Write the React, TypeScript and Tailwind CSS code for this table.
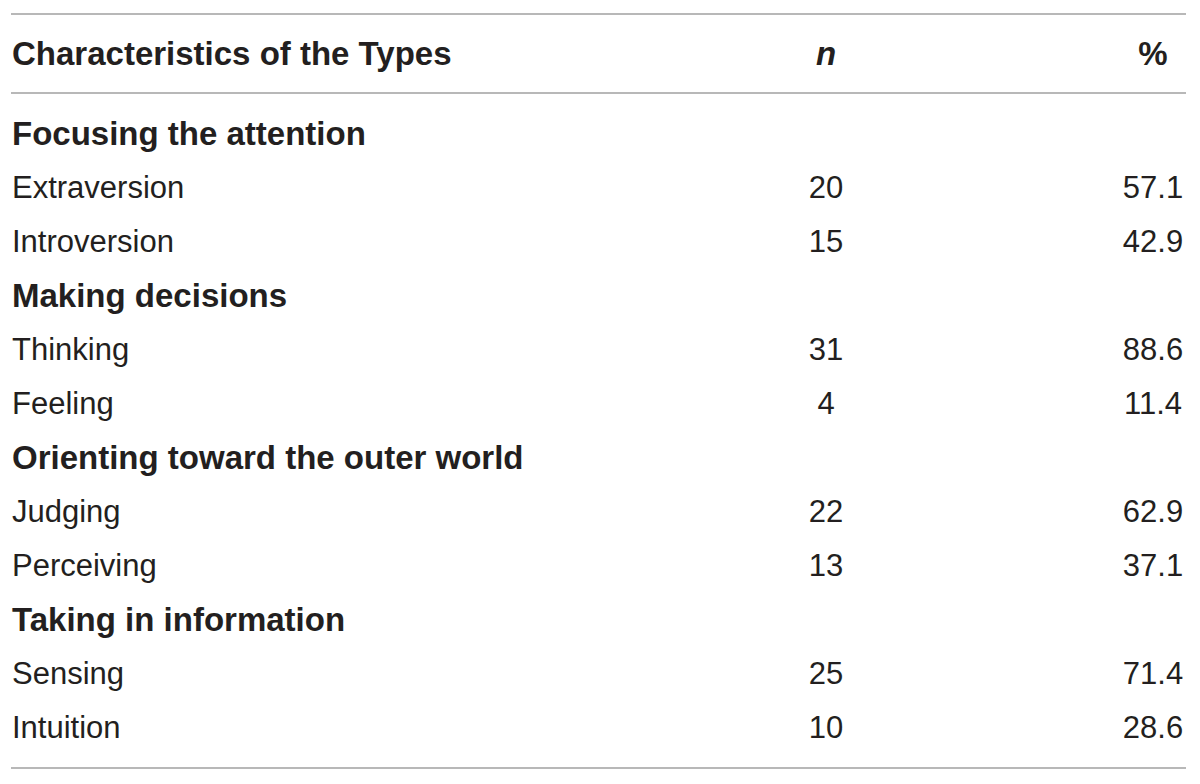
import React from 'react';

type Row = { label: string; n?: string; pct?: string; group?: boolean };

const rows: Row[] = [
  { label: 'Focusing the attention', group: true },
  { label: 'Extraversion', n: '20', pct: '57.1' },
  { label: 'Introversion', n: '15', pct: '42.9' },
  { label: 'Making decisions', group: true },
  { label: 'Thinking', n: '31', pct: '88.6' },
  { label: 'Feeling', n: '4', pct: '11.4' },
  { label: 'Orienting toward the outer world', group: true },
  { label: 'Judging', n: '22', pct: '62.9' },
  { label: 'Perceiving', n: '13', pct: '37.1' },
  { label: 'Taking in information', group: true },
  { label: 'Sensing', n: '25', pct: '71.4' },
  { label: 'Intuition', n: '10', pct: '28.6' },
];

export default function App() {
  return (
    <div className="w-[1200px] h-[784px] bg-white pt-[13px] pl-[11px] font-['Liberation_Sans',Arial,sans-serif] text-[#231f20]">
      <div className="w-[1175px] border-t-2 border-b-2 border-[#b8b8b8]">
        {/* Header */}
        <div className="flex items-center h-[79px] border-b-2 border-[#b8b8b8] text-[33px] font-bold">
          <div className="flex-1 pl-[1px]">Characteristics of the Types</div>
          <div className="w-[200px] text-center italic">n</div>
          <div className="w-[66px] ml-[194px] text-center">%</div>
        </div>

        {/* Body */}
        <div className="pt-[13px] pb-[12px]">
          {rows.map((r) => (
            <div key={r.label} className="flex items-center h-[54px] leading-[54px]">
              {r.group ? (
                <div className="flex-1 pl-[1px] text-[33px] font-bold">{r.label}</div>
              ) : (
                <>
                  <div className="flex-1 pl-[1px] text-[31px]">{r.label}</div>
                  <div className="w-[200px] text-center text-[31px]">{r.n}</div>
                  <div className="w-[66px] ml-[194px] text-center text-[31px]">{r.pct}</div>
                </>
              )}
            </div>
          ))}
        </div>
      </div>
    </div>
  );
}
